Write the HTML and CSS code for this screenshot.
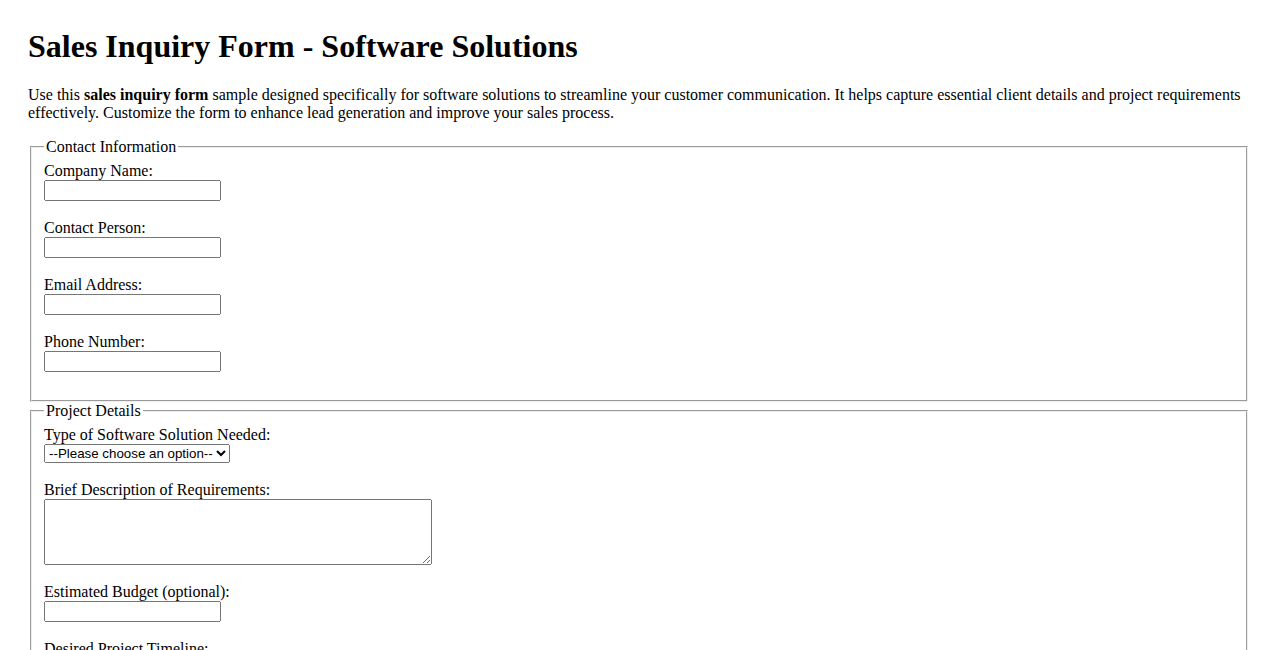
FILE: index.html
```html
<!DOCTYPE html>
<html lang="en">
<head>
<meta charset="utf-8">
<title>Sales Inquiry Form - Software Solutions</title>
<link rel="stylesheet" href="styles.css">
</head>
<body class="page">
<h1 class="page-title">Sales Inquiry Form - Software Solutions</h1>
<p class="intro">Use this <strong>sales inquiry form</strong> sample designed specifically for software solutions to streamline your customer communication. It helps capture essential client details and project requirements effectively. Customize the form to enhance lead generation and improve your sales process.</p>

<form class="inquiry-form" action="#" method="post">
  <fieldset class="form-section">
    <legend>Contact Information</legend>
    <label for="company">Company Name:</label><br>
    <input class="text-field" type="text" id="company" name="company"><br><br>

    <label for="contact">Contact Person:</label><br>
    <input class="text-field" type="text" id="contact" name="contact"><br><br>

    <label for="email">Email Address:</label><br>
    <input class="text-field" type="email" id="email" name="email"><br><br>

    <label for="phone">Phone Number:</label><br>
    <input class="text-field" type="tel" id="phone" name="phone"><br><br>
  </fieldset>

  <fieldset class="form-section">
    <legend>Project Details</legend>
    <label for="solution">Type of Software Solution Needed:</label><br>
    <select class="choice-field" id="solution" name="solution">
      <option value="">--Please choose an option--</option>
      <option value="crm">CRM Software</option>
      <option value="erp">ERP System</option>
      <option value="custom">Custom Application</option>
      <option value="saas">SaaS Platform</option>
      <option value="other">Other</option>
    </select><br><br>

    <label for="requirements">Brief Description of Requirements:</label><br>
    <textarea class="text-area" id="requirements" name="requirements"></textarea><br><br>

    <label for="budget">Estimated Budget (optional):</label><br>
    <input class="text-field" type="text" id="budget" name="budget"><br><br>

    <label for="timeline">Desired Project Timeline:</label><br>
    <input class="text-field" type="text" id="timeline" name="timeline"><br><br>
  </fieldset>

  <fieldset class="form-section">
    <legend>Additional Information</legend>
    <label for="source">How did you hear about us?</label><br>
    <input class="text-field" type="text" id="source" name="source"><br><br>

    <label for="comments">Additional Comments:</label><br>
    <textarea class="text-area" id="comments" name="comments"></textarea><br><br>
  </fieldset>

  <p class="actions"><input type="submit" value="Submit Inquiry"></p>
</form>
</body>
</html>
```

FILE: styles.css
```css
/* Plain document styling: serif body text, native form controls */
.page {
  margin: 28px;
  font-family: "Liberation Serif", "Times New Roman", serif;
  font-size: 16px;
  color: #000;
  background: #fff;
}

.page-title {
  font-size: 2em;
  font-weight: bold;
  margin: 0 0 0.67em;
}

.intro {
  margin: 1em 0;
}

.form-section {
  margin: 0 2px;
}

.text-field {
  box-sizing: border-box;
  width: 177px;
  height: 21px;
  font-family: "Liberation Sans", Arial, sans-serif;
  font-size: 13.333px;
}

.choice-field {
  font-family: "Liberation Sans", Arial, sans-serif;
  font-size: 13.333px;
}

.text-area {
  box-sizing: border-box;
  width: 388px;
  height: 66px;
  vertical-align: top;
  font-family: "Liberation Mono", "Courier New", monospace;
  font-size: 13.333px;
}
```
